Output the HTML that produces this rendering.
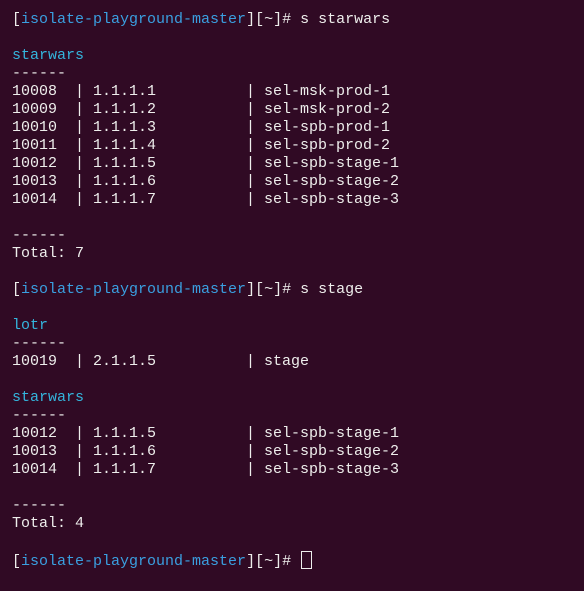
<!DOCTYPE html>
<html><head><meta charset="utf-8"><style>
html,body{margin:0;padding:0;background:#300a24;width:584px;height:591px;overflow:hidden}
pre{margin:0;padding:11px 0 0 12px;font-family:"Liberation Mono",monospace;font-size:15px;line-height:18px;color:#eeeeec;white-space:pre}
.h{color:#3a9fe0}.c{color:#34b4dc}
.cur{display:inline-block;width:9px;height:16px;border:1px solid #eeeeec;vertical-align:-4px;margin-left:1px}
</style></head><body><pre>[<span class="h">isolate-playground-master</span>][~]# s starwars

<span class="c">starwars</span>
------
10008  | 1.1.1.1          | sel-msk-prod-1
10009  | 1.1.1.2          | sel-msk-prod-2
10010  | 1.1.1.3          | sel-spb-prod-1
10011  | 1.1.1.4          | sel-spb-prod-2
10012  | 1.1.1.5          | sel-spb-stage-1
10013  | 1.1.1.6          | sel-spb-stage-2
10014  | 1.1.1.7          | sel-spb-stage-3

------
Total: 7

[<span class="h">isolate-playground-master</span>][~]# s stage

<span class="c">lotr</span>
------
10019  | 2.1.1.5          | stage

<span class="c">starwars</span>
------
10012  | 1.1.1.5          | sel-spb-stage-1
10013  | 1.1.1.6          | sel-spb-stage-2
10014  | 1.1.1.7          | sel-spb-stage-3

------
Total: 4

[<span class="h">isolate-playground-master</span>][~]# <span class="cur"></span></pre></body></html>
